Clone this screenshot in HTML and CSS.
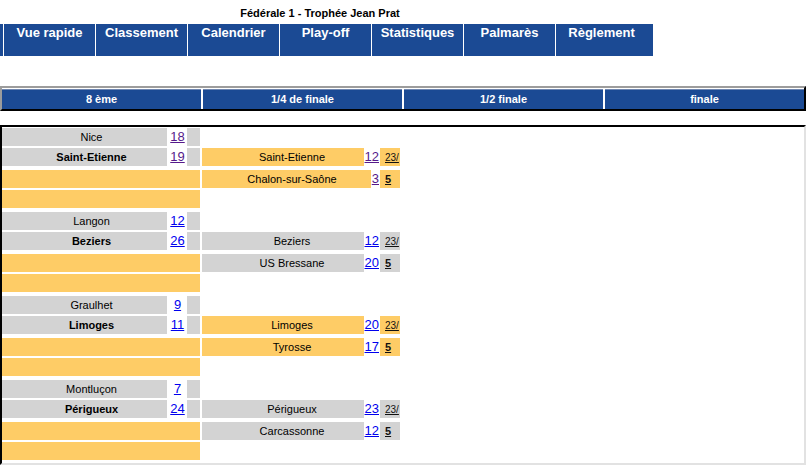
FILE: index.html
```html
<!DOCTYPE html>
<html lang="fr">
<head>
<meta charset="utf-8">
<title>Fédérale 1 - Trophée Jean Prat</title>
<link rel="stylesheet" href="styles.css">
</head>
<body>
<div class="title">Fédérale 1 - Trophée Jean Prat</div>
<nav class="nav">
  <span class="nav-lead"></span>
  <a class="nav-item" href="#">Vue rapide</a>
  <a class="nav-item" href="#">Classement</a>
  <a class="nav-item" href="#">Calendrier</a>
  <a class="nav-item" href="#">Play-off</a>
  <a class="nav-item" href="#">Statistiques</a>
  <a class="nav-item" href="#">Palmarès</a>
  <a class="nav-item last" href="#">Règlement</a>
</nav>
<div class="rounds">
  <div class="round">8 ème</div>
  <div class="round">1/4 de finale</div>
  <div class="round">1/2 finale</div>
  <div class="round">finale</div>
</div>
<div class="bracket">
  <div class="group">
    <div class="line">
      <div class="m1 gray"><div class="name"><span class="label">Nice</span></div><a class="score v" href="#">18</a><div class="end"></div></div>
    </div>
    <div class="line">
      <div class="m1 gray"><div class="name"><span class="label win">Saint-Etienne</span></div><a class="score v" href="#">19</a><div class="end"></div></div>
      <div class="m2 orange"><div class="name"><span class="label">Saint-Etienne</span></div><a class="score v" href="#">12</a><div class="end"><a href="#">23/</a></div></div>
    </div>
    <div class="line">
      <div class="m1 orange empty"></div>
      <div class="m2 orange"><div class="name"><span class="label">Chalon-sur-Saône</span></div><a class="score v" href="#">3</a><div class="end"><a class="big" href="#">5</a></div></div>
    </div>
    <div class="line">
      <div class="m1 orange empty"></div>
    </div>
  </div>
  <div class="group">
    <div class="line">
      <div class="m1 gray"><div class="name"><span class="label">Langon</span></div><a class="score" href="#">12</a><div class="end"></div></div>
    </div>
    <div class="line">
      <div class="m1 gray"><div class="name"><span class="label win">Beziers</span></div><a class="score" href="#">26</a><div class="end"></div></div>
      <div class="m2 gray"><div class="name"><span class="label">Beziers</span></div><a class="score" href="#">12</a><div class="end"><a href="#">23/</a></div></div>
    </div>
    <div class="line">
      <div class="m1 orange empty"></div>
      <div class="m2 gray"><div class="name"><span class="label">US Bressane</span></div><a class="score" href="#">20</a><div class="end"><a class="big" href="#">5</a></div></div>
    </div>
    <div class="line">
      <div class="m1 orange empty"></div>
    </div>
  </div>
  <div class="group">
    <div class="line">
      <div class="m1 gray"><div class="name"><span class="label">Graulhet</span></div><a class="score" href="#">9</a><div class="end"></div></div>
    </div>
    <div class="line">
      <div class="m1 gray"><div class="name"><span class="label win">Limoges</span></div><a class="score" href="#">11</a><div class="end"></div></div>
      <div class="m2 orange"><div class="name"><span class="label">Limoges</span></div><a class="score" href="#">20</a><div class="end"><a href="#">23/</a></div></div>
    </div>
    <div class="line">
      <div class="m1 orange empty"></div>
      <div class="m2 orange"><div class="name"><span class="label">Tyrosse</span></div><a class="score" href="#">17</a><div class="end"><a class="big" href="#">5</a></div></div>
    </div>
    <div class="line">
      <div class="m1 orange empty"></div>
    </div>
  </div>
  <div class="group">
    <div class="line">
      <div class="m1 gray"><div class="name"><span class="label">Montluçon</span></div><a class="score" href="#">7</a><div class="end"></div></div>
    </div>
    <div class="line">
      <div class="m1 gray"><div class="name"><span class="label win">Périgueux</span></div><a class="score" href="#">24</a><div class="end"></div></div>
      <div class="m2 gray"><div class="name"><span class="label">Périgueux</span></div><a class="score" href="#">23</a><div class="end"><a href="#">23/</a></div></div>
    </div>
    <div class="line">
      <div class="m1 orange empty"></div>
      <div class="m2 gray"><div class="name"><span class="label">Carcassonne</span></div><a class="score" href="#">12</a><div class="end"><a class="big" href="#">5</a></div></div>
    </div>
    <div class="line">
      <div class="m1 orange empty"></div>
    </div>
  </div>
</div>
</body>
</html>
```
FILE: styles.css
```css
body {
  margin: 0;
  background: #ffffff;
  color: #000000;
  font-family: "Liberation Sans", Arial, sans-serif;
}

.title {
  width: 640px;
  padding-top: 7px;
  margin-bottom: 4px;
  text-align: center;
  font-size: 11px;
  line-height: 13px;
  font-weight: bold;
}

.nav {
  display: flex;
  gap: 1px;
  height: 32px;
}

.nav-lead {
  width: 3px;
  background: #1b4a94;
}

.nav-item {
  width: 91px;
  box-sizing: border-box;
  padding-top: 1px;
  background: #1b4a94;
  color: #ffffff;
  font-size: 13px;
  line-height: 15px;
  font-weight: bold;
  text-align: center;
  text-decoration: none;
}

.nav-item.last {
  width: 97px;
  padding-right: 6px;
}

.rounds {
  display: flex;
  gap: 2px;
  width: 806px;
  box-sizing: border-box;
  margin-top: 30px;
  padding-top: 1px;
  border: 2px solid;
  border-color: #9c9c9c #000000 #000000 #9c9c9c;
}

.round {
  flex: 1;
  height: 20px;
  background: #1b4a94;
  border-top: 1px solid #6f86b0;
  box-sizing: border-box;
  color: #ffffff;
  font-size: 11px;
  line-height: 18px;
  font-weight: bold;
  text-align: center;
}

.bracket {
  width: 806px;
  box-sizing: border-box;
  margin-top: 14px;
  padding-top: 1px;
  border: 2px solid;
  border-color: #000000 #e2e2e2 #e2e2e2 #000000;
}

.line {
  display: flex;
  gap: 2px;
  height: 18px;
  margin-bottom: 2px;
}

.line:nth-child(2),
.line:nth-child(4) {
  margin-bottom: 4px;
}

.group:last-child .line:last-child {
  margin-bottom: 3px;
}

.m1,
.m2 {
  display: flex;
  width: 198px;
  font-size: 11px;
  line-height: 18px;
}

.m1.empty {
  background: #fecc66;
}

.name {
  flex: 1;
  min-width: 0;
  overflow: visible;
  white-space: nowrap;
}

.label {
  display: block;
  text-align: center;
}

.m1 .label {
  width: 179px;
}

.m2 .label {
  width: 180px;
}

.win {
  font-weight: bold;
}

.gray .name,
.gray .end {
  background: #d3d3d3;
}

.orange .name,
.orange .end {
  background: #fecc66;
}

.score {
  font-size: 13px;
  line-height: 18px;
  color: #0000ee;
  text-align: center;
  background: #ffffff;
}

.score.v {
  color: #551a8b;
}

.m1 .score {
  width: 17px;
  margin-left: 2px;
  margin-right: 1px;
}

.m1 .end {
  width: 13px;
}

.m2 .score {
  margin-left: 1px;
  margin-right: 1px;
}

.m2 .end {
  width: 20px;
  box-sizing: border-box;
  padding-left: 5px;
  white-space: nowrap;
}

.end a {
  color: #111111;
  font-size: 10px;
}

.end a.big {
  font-size: 11px;
  font-weight: bold;
}
```
